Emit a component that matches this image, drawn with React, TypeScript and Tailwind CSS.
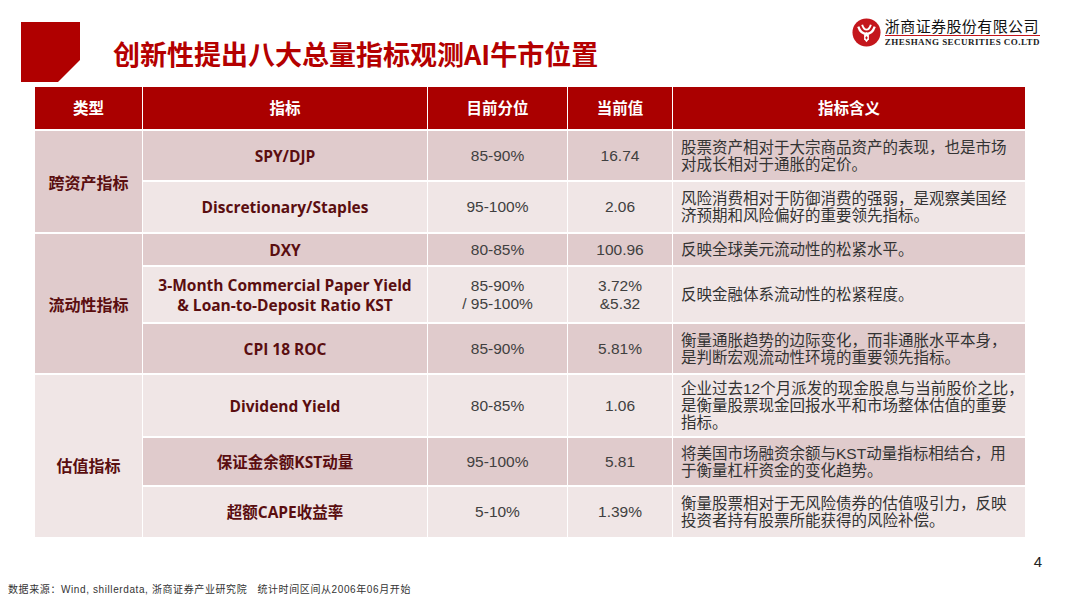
import React from 'react';

type Tone = 'dark' | 'light';

interface IndicatorRow {
  name: string[];
  pct: string[];
  val: string[];
  desc: string[];
  tone: Tone;
}

interface Group {
  label: string;
  tone: Tone;
  labelPad: string;
  rows: IndicatorRow[];
}

const GROUPS: Group[] = [
  {
    label: '跨资产指标',
    tone: 'dark',
    labelPad: '',
    rows: [
      {
        name: ['SPY/DJP'],
        pct: ['85-90%'],
        val: ['16.74'],
        desc: ['股票资产相对于大宗商品资产的表现，也是市场', '对成长相对于通胀的定价。'],
        tone: 'dark',
      },
      {
        name: ['Discretionary/Staples'],
        pct: ['95-100%'],
        val: ['2.06'],
        desc: ['风险消费相对于防御消费的强弱，是观察美国经', '济预期和风险偏好的重要领先指标。'],
        tone: 'light',
      },
    ],
  },
  {
    label: '流动性指标',
    tone: 'dark',
    labelPad: '',
    rows: [
      {
        name: ['DXY'],
        pct: ['80-85%'],
        val: ['100.96'],
        desc: ['反映全球美元流动性的松紧水平。'],
        tone: 'dark',
      },
      {
        name: ['3-Month Commercial Paper Yield', '& Loan-to-Deposit Ratio KST'],
        pct: ['85-90%', '/ 95-100%'],
        val: ['3.72%', '&5.32'],
        desc: ['反映金融体系流动性的松紧程度。'],
        tone: 'light',
      },
      {
        name: ['CPI 18 ROC'],
        pct: ['85-90%'],
        val: ['5.81%'],
        desc: ['衡量通胀趋势的边际变化，而非通胀水平本身，', '是判断宏观流动性环境的重要领先指标。'],
        tone: 'dark',
      },
    ],
  },
  {
    label: '估值指标',
    tone: 'light',
    labelPad: 'pt-[18px]',
    rows: [
      {
        name: ['Dividend Yield'],
        pct: ['80-85%'],
        val: ['1.06'],
        desc: ['企业过去12个月派发的现金股息与当前股价之比，', '是衡量股票现金回报水平和市场整体估值的重要', '指标。'],
        tone: 'light',
      },
      {
        name: ['保证金余额KST动量'],
        pct: ['95-100%'],
        val: ['5.81'],
        desc: ['将美国市场融资余额与KST动量指标相结合，用', '于衡量杠杆资金的变化趋势。'],
        tone: 'dark',
      },
      {
        name: ['超额CAPE收益率'],
        pct: ['5-10%'],
        val: ['1.39%'],
        desc: ['衡量股票相对于无风险债券的估值吸引力，反映', '投资者持有股票所能获得的风险补偿。'],
        tone: 'light',
      },
    ],
  },
];

const TONE_BG: Record<Tone, string> = {
  dark: 'bg-[#e0cbcc]',
  light: 'bg-[#f0e6e6]',
};

const ROW_SPAN: Record<number, string> = {
  2: 'row-span-2',
  3: 'row-span-3',
};

const HEADERS = ['类型', '指标', '目前分位', '当前值', '指标含义'];

function Lines({ lines }: { lines: string[] }) {
  return (
    <>
      {lines.map((line) => (
        <span key={line} className="block whitespace-nowrap">
          {line}
        </span>
      ))}
    </>
  );
}

function Logo() {
  return (
    <div className="flex items-center gap-[4px]">
      <svg width="29" height="29" viewBox="0 0 30 30">
        <circle cx="15" cy="15" r="14.5" fill="#c4161c" />
        <path d="M6.5 9 Q9 16.5 15 16.5 Q21 16.5 23.5 9" stroke="#fff" strokeWidth="2.4" fill="none" />
        <path d="M10.5 7 Q12 12 15 12 Q18 12 19.5 7" stroke="#fff" strokeWidth="2" fill="none" />
        <path d="M12.5 17 L15 14.5 L17.5 17 L17.5 22 L15 25 L12.5 22 Z" fill="#fff" />
        <path d="M15 18.5 L16.3 20.5 L15 22.5 L13.7 20.5 Z" fill="#c4161c" />
      </svg>
      <div className="flex flex-col">
        <div className="font-['Noto_Sans_CJK_SC',sans-serif] text-[15px] leading-[17px] tracking-[0.4px] text-[#111]">
          浙商证券股份有限公司
        </div>
        <div className="mt-px h-px bg-[#c4161c]" />
        <div className="mt-[1px] font-['Liberation_Serif',serif] text-[9px] leading-[10px] font-bold tracking-[0.45px] text-[#222]">
          ZHESHANG SECURITIES CO.LTD
        </div>
      </div>
    </div>
  );
}

function IndicatorTable() {
  return (
    <div className="ml-[35px] grid w-[990px] grid-cols-[107px_284px_139px_104px_352px] grid-rows-[42px_49px_50px_31px_55px_49px_61px_47px_50px] gap-x-px gap-y-[2px] bg-white">
      {HEADERS.map((h) => (
        <div
          key={h}
          className="flex items-center justify-center bg-[#aa0000] font-['Noto_Sans_CJK_SC',sans-serif] text-[15.5px] font-bold text-white"
        >
          {h}
        </div>
      ))}
      {GROUPS.map((group) => (
        <React.Fragment key={group.label}>
          <div
            className={`${ROW_SPAN[group.rows.length]} ${TONE_BG[group.tone]} ${group.labelPad} flex items-center justify-center font-['Noto_Sans_CJK_SC',sans-serif] text-[16px] font-bold text-[#5a0e10]`}
          >
            {group.label}
          </div>
          {group.rows.map((row) => (
            <React.Fragment key={row.name[0]}>
              <div
                className={`${TONE_BG[row.tone]} flex flex-col items-center justify-center text-center font-['Open_Sans','Noto_Sans_CJK_SC',sans-serif] text-[15.5px] leading-[20px] font-bold text-[#5a0e10]`}
              >
                <Lines lines={row.name} />
              </div>
              <div
                className={`${TONE_BG[row.tone]} flex flex-col items-center justify-center text-center font-['Liberation_Sans',sans-serif] text-[15.5px] leading-[18px] text-[#404040]`}
              >
                <Lines lines={row.pct} />
              </div>
              <div
                className={`${TONE_BG[row.tone]} flex flex-col items-center justify-center text-center font-['Liberation_Sans',sans-serif] text-[15.5px] leading-[18px] text-[#404040]`}
              >
                <Lines lines={row.val} />
              </div>
              <div
                className={`${TONE_BG[row.tone]} flex flex-col justify-center pl-[8px] font-['Liberation_Sans','Noto_Sans_CJK_SC',sans-serif] text-[15.5px] leading-[17px] text-[#333]`}
              >
                <Lines lines={row.desc} />
              </div>
            </React.Fragment>
          ))}
        </React.Fragment>
      ))}
    </div>
  );
}

export default function App() {
  return (
    <div className="relative flex h-[600px] w-[1067px] flex-col overflow-hidden bg-white">
      <div className="flex h-[87px] items-start justify-between">
        <div className="flex items-start">
          <svg className="ml-[21px] mt-[22px]" width="59" height="60" viewBox="0 0 59 60">
            <polygon points="0,0 59,0 59,38 37,60 0,60" fill="#b00000" />
          </svg>
          <h1 className="ml-[33px] mt-[40px] font-['Noto_Sans_CJK_SC',sans-serif] text-[27px] leading-[27px] font-bold text-[#b40000]">
            创新性提出八大总量指标观测AI牛市位置
          </h1>
        </div>
        <div className="mr-[27px] mt-[17px]">
          <Logo />
        </div>
      </div>

      <IndicatorTable />

      <div className="mt-[17px] flex h-[16px] justify-end pr-[25px] font-['Liberation_Sans',sans-serif] text-[15px] leading-[16px] text-[#222]">
        4
      </div>
      <div className="mt-[14px] pl-[8px] font-['Liberation_Sans','Noto_Sans_CJK_SC',sans-serif] text-[10px] leading-[12px] tracking-[0.6px] text-[#333]">
        数据来源：Wind, shillerdata, 浙商证券产业研究院&nbsp;&nbsp;&nbsp;统计时间区间从2006年06月开始
      </div>
    </div>
  );
}
